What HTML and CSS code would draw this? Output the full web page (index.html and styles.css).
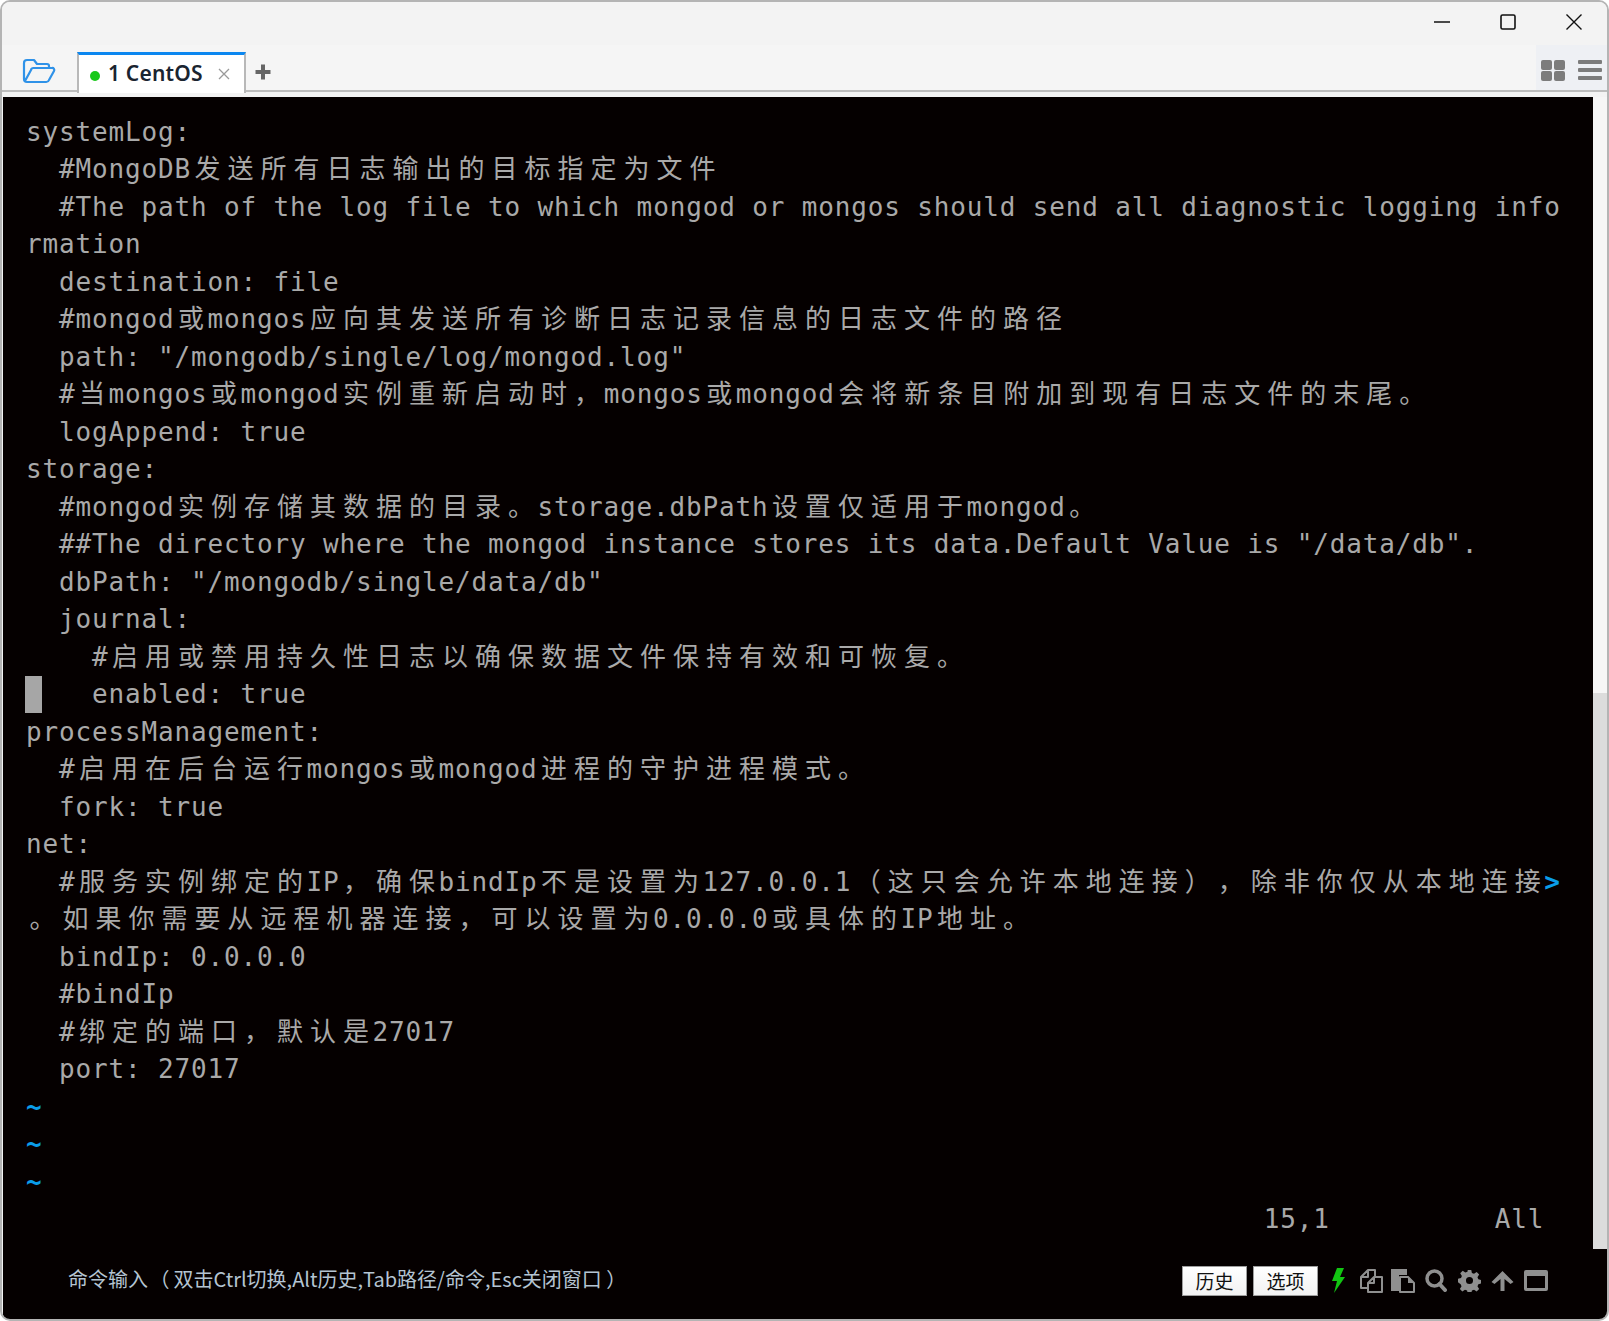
FILE: index.html
```html
<!DOCTYPE html>
<html lang="zh">
<head>
<meta charset="utf-8">
<title>CentOS</title>
<link rel="stylesheet" href="styles.css">
</head>
<body>
<div class="window">
  <header class="titlebar">
    <button class="winbtn"><svg width="16" height="16" viewBox="0 0 16 16"><path d="M0 8h16" class="wi"/></svg></button>
    <button class="winbtn"><svg width="16" height="16" viewBox="0 0 16 16"><rect x="1" y="1" width="14" height="14" rx="1.500" class="wi wi2"/></svg></button>
    <button class="winbtn"><svg width="18" height="18" viewBox="0 0 18 18"><path d="M1.500 1.500l15 15M16.500 1.500l-15 15" class="wi"/></svg></button>
  </header>
  <nav class="tabbar">
    <div class="folder"><svg width="34" height="26" viewBox="0 0 34 26"><path d="M2 21V5a3 3 0 0 1 3-3h7l3 4h10a2 2 0 0 1 2 2v2M3 23l6-11a2.500 2.500 0 0 1 2.500-2H30a2 2 0 0 1 2 3l-5 9a3 3 0 0 1-3 2H5a3 3 0 0 1-3-3" class="fi"/></svg></div>
    <div class="tab"><span class="dot"></span><span class="tabname">1 CentOS</span><svg class="tabx" width="12" height="12" viewBox="0 0 12 12"><path d="M1 1l10 10M11 1L1 11"/></svg></div>
    <svg class="plus" width="16" height="16" viewBox="0 0 16 16"><path d="M6 0.500h4v5.500h5.500v4H10v5.500H6V10H0.500V6H6z"/></svg>
    <div class="viewbtns">
      <svg width="24" height="21" viewBox="0 0 24 21"><rect width="11" height="10" rx="2"/><rect x="13" width="11" height="10" rx="2"/><rect y="11" width="11" height="10" rx="2"/><rect x="13" y="11" width="11" height="10" rx="2"/></svg>
      <svg width="24" height="20" viewBox="0 0 24 20"><rect width="24" height="4" rx="1"/><rect y="8" width="24" height="4" rx="1"/><rect y="16" width="24" height="4" rx="1"/></svg>
    </div>
  </nav>
  <main class="content">
    <section class="terminal">
      <div class="ln">systemLog:</div>
      <div class="ln">  #MongoDB<span class="z">发送所有日志输出的目标指定为文件</span></div>
      <div class="ln">  #The path of the log file to which mongod or mongos should send all diagnostic logging info</div>
      <div class="ln">rmation</div>
      <div class="ln">  destination: file</div>
      <div class="ln">  #mongod<span class="z">或</span>mongos<span class="z">应向其发送所有诊断日志记录信息的日志文件的路径</span></div>
      <div class="ln">  path: "/mongodb/single/log/mongod.log"</div>
      <div class="ln">  #<span class="z">当</span>mongos<span class="z">或</span>mongod<span class="z">实例重新启动时，</span>mongos<span class="z">或</span>mongod<span class="z">会将新条目附加到现有日志文件的末尾。</span></div>
      <div class="ln">  logAppend: true</div>
      <div class="ln">storage:</div>
      <div class="ln">  #mongod<span class="z">实例存储其数据的目录。</span>storage.dbPath<span class="z">设置仅适用于</span>mongod<span class="z">。</span></div>
      <div class="ln">  ##The directory where the mongod instance stores its data.Default Value is "/data/db".</div>
      <div class="ln">  dbPath: "/mongodb/single/data/db"</div>
      <div class="ln">  journal:</div>
      <div class="ln">    #<span class="z">启用或禁用持久性日志以确保数据文件保持有效和可恢复。</span></div>
      <div class="ln cursorline">    enabled: true</div>
      <div class="ln">processManagement:</div>
      <div class="ln">  #<span class="z">启用在后台运行</span>mongos<span class="z">或</span>mongod<span class="z">进程的守护进程模式。</span></div>
      <div class="ln">  fork: true</div>
      <div class="ln">net:</div>
      <div class="ln">  #<span class="z">服务实例绑定的</span>IP<span class="z">，确保</span>bindIp<span class="z">不是设置为</span>127.0.0.1<span class="z">（这只会允许本地连接），除非你仅从本地连接</span><span class="blue">&gt;</span></div>
      <div class="ln"><span class="z">。如果你需要从远程机器连接，可以设置为</span>0.0.0.0<span class="z">或具体的</span>IP<span class="z">地址。</span></div>
      <div class="ln">  bindIp: 0.0.0.0</div>
      <div class="ln">  #bindIp</div>
      <div class="ln">  #<span class="z">绑定的端口，默认是</span>27017</div>
      <div class="ln">  port: 27017</div>
      <div class="ln blue">~</div>
      <div class="ln blue">~</div>
      <div class="ln blue">~</div>
      <div class="ln">                                                                           15,1          All</div>
    </section>
    <aside class="scrollbar"><div class="thumb"></div></aside>
  </main>
  <footer class="cmdbar">
    <div class="hint">命令输入 <span class="pn">（</span>双击Ctrl切换,Alt历史,Tab路径/命令,Esc关闭窗口 ）</div>
    <div class="tools">
      <button class="tb">历史</button>
      <button class="tb">选项</button>
      <svg class="ic bolt" width="14" height="25" viewBox="0 0 14 25"><path d="M6 0h7L9 9h5L3 25l3-12H1z"/></svg>
      <svg class="ic copy" width="24" height="24" viewBox="0 0 24 24"><path d="M16 7V1H9L2 8v11h6M9 1v7H2" class="ol"/><path d="M9 23V14l6-6h8v15zM15 8v6H9" class="ol"/></svg>
      <svg class="ic" width="24" height="25" viewBox="0 0 24 25"><path d="M0 1h16v6H8v16H0z"/><path d="M9 9h8l6 6v9H9z" class="ol"/><path d="M17 8v7h6"/></svg>
      <svg class="ic" width="22" height="23" viewBox="0 0 22 23"><circle cx="9.500" cy="9.500" r="7.500" class="ol3"/><path d="M14.500 15l5.500 6" class="ol4"/></svg>
      <svg class="ic gear" width="23" height="23" viewBox="-1 -1 26 26"><path fill-rule="evenodd" d="M10 0h4l.7 3.400 2.400 1 3-1.900 2.800 2.800-1.900 3 1 2.400 3.400.7v4l-3.400.7-1 2.400 1.900 3-2.800 2.800-3-1.900-2.400 1-.7 3.400h-4l-.7-3.400-2.400-1-3 1.900-2.800-2.800 1.900-3-1-2.400L-1 14v-4l3.400-.7 1-2.400-1.900-3 2.800-2.800 3 1.900 2.400-1zM12 8a4 4 0 1 0 0 8 4 4 0 0 0 0-8z"/></svg>
      <svg class="ic" width="23" height="20" viewBox="0 0 22 20"><path d="M11 0l11 11-3 2-6-5v12H9V8l-6 5-3-2z"/></svg>
      <svg class="ic" width="24" height="21" viewBox="0 0 24 21"><path fill-rule="evenodd" d="M2 0h20a2 2 0 0 1 2 2v17a2 2 0 0 1-2 2H2a2 2 0 0 1-2-2V2a2 2 0 0 1 2-2zM3 6v12h18V6z"/></svg>
    </div>
  </footer>
</div>
</body>
</html>
```
FILE: styles.css
```css
* { box-sizing: border-box; }
html, body { margin: 0; padding: 0; background: #ffffff; }
.window {
  width: 1609px; height: 1321px;
  display: flex; flex-direction: column;
  border: 2px solid #b4b4b4;
  border-radius: 10px;
  background: #f3f3f3;
  overflow: hidden;
}
.titlebar {
  height: 43px; flex: none;
  display: flex; justify-content: flex-end; align-items: flex-start;
  background: #f3f3f3;
}
.winbtn {
  width: 66px; height: 40px;
  background: none; border: 0; padding: 0;
  display: flex; align-items: center; justify-content: center;
}
.wi { fill: none; stroke: #111; stroke-width: 1.400; }
.wi2 { stroke-width: 1.600; }
.tabbar {
  height: 47px; flex: none;
  display: flex; align-items: flex-end;
  background: #f5f5f5;
  border-bottom: 2px solid #bdbdbd;
  position: relative;
  padding-left: 20px;
}
.folder { width: 55px; align-self: center; display: flex; margin-top: 7px; }
.fi { fill: none; stroke: #2f92e8; stroke-width: 2.200; stroke-linejoin: round; }
.tab {
  width: 169px; height: 41px;
  margin-bottom: -3px;
  display: flex; align-items: center;
  background: #fff;
  border-top: 3px solid #0b87f0;
  border-left: 2px solid #b8b8b8;
  border-right: 2px solid #b8b8b8;
  padding-left: 11px;
}
.dot { width: 10px; height: 10px; border-radius: 50%; background: #18c81a; margin-right: 8px; margin-top: 3px; }
.tabname { color: #1a2430; font: 600 21px/1 "Noto Sans", sans-serif; letter-spacing: .2px; margin-bottom: 2px; }
.tabx { margin-left: 15px; stroke: #9a9a9a; stroke-width: 1.300; fill: none; }
.plus { margin: 0 0 10px 9px; fill: #666; }
.viewbtns {
  width: 71px;
  display: flex; align-items: center; gap: 13px;
  padding-left: 5px; padding-top: 5px;
  background: #eef0f4; fill: #7c7c7c;
  position: absolute; right: 0; top: 0; height: 45px;
}
.content {
  flex: 1; min-height: 0;
  display: flex;
  margin-top: 5px;
}
.terminal {
  flex: 1; min-width: 0;
  margin-left: 1px;
  background: #050000;
  color: #a9a9a9;
  font: 26px/37.500px "DejaVu Sans Mono", monospace;
  letter-spacing: .85px;
  padding: 16.500px 0 0 23px;
  overflow: hidden;
}
.ln { height: 37.500px; position: relative; white-space: pre; }
.z {
  font-family: "Noto Sans CJK SC", sans-serif;
  font-size: 26px; line-height: 1; letter-spacing: 7px;
  padding-left: 3.500px; margin-right: -3.500px;
  text-spacing-trim: space-all;
}
.blue { color: #0a9de8; font-weight: 700; }
.cursorline::before {
  content: ""; position: absolute; left: -1px; top: 0; width: 17px; height: 37px;
  background: #a6a6a6;
}
.scrollbar { width: 14px; flex: none; background: #dcdcdc; }
.thumb { height: 596px; background: #f6f6f6; }
.cmdbar {
  height: 70px; flex: none;
  display: flex; align-items: center; justify-content: space-between;
  background: #050000;
  padding: 0 59px 7px 0;
  margin-left: 1px;
}
.hint {
  color: #b4c4d2;
  font: 20px/1 "Noto Sans CJK SC", sans-serif;
  padding-left: 65px; padding-bottom: 3px;
  white-space: pre;
  text-spacing-trim: space-all;
}
.pn { margin-left: -3px; margin-right: 4px; }
.tools { display: flex; align-items: center; gap: 10px; fill: #8f8f8f; }
.tb {
  width: 65px; height: 30px; padding: 0;
  background: linear-gradient(#fff, #f2f2f2);
  border: 1px solid #9e9e9e;
  color: #111;
  font: 19px/1 "Noto Sans CJK SC", sans-serif;
}
.tb + .tb { margin-left: -4px; }
.bolt { fill: #12c512; margin: 0 4px 0 3px; }
.copy { margin-right: -2px; }
.gear { margin-left: 1px; }
.ol { fill: none; stroke: #8f8f8f; stroke-width: 2; stroke-linejoin: round; }
.ol3 { fill: none; stroke: #8f8f8f; stroke-width: 3.500; }
.ol4 { fill: none; stroke: #8f8f8f; stroke-width: 4; stroke-linecap: round; }
```
